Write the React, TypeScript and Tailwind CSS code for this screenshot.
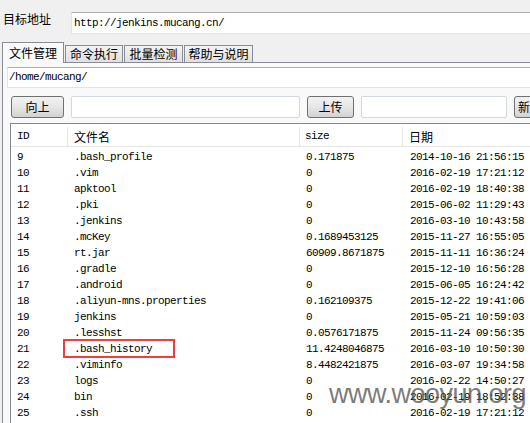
const rows = [
  { id: "9", name: ".bash_profile", size: "0.171875", date: "2014-10-16 21:56:15" },
  { id: "10", name: ".vim", size: "0", date: "2016-02-19 17:21:12" },
  { id: "11", name: "apktool", size: "0", date: "2016-02-19 18:40:38" },
  { id: "12", name: ".pki", size: "0", date: "2015-06-02 11:29:43" },
  { id: "13", name: ".jenkins", size: "0", date: "2016-03-10 10:43:58" },
  { id: "14", name: ".mcKey", size: "0.1689453125", date: "2015-11-27 16:55:05" },
  { id: "15", name: "rt.jar", size: "60909.8671875", date: "2015-11-11 16:36:24" },
  { id: "16", name: ".gradle", size: "0", date: "2015-12-10 16:56:28" },
  { id: "17", name: ".android", size: "0", date: "2015-06-05 16:24:42" },
  { id: "18", name: ".aliyun-mns.properties", size: "0.162109375", date: "2015-12-22 19:41:06" },
  { id: "19", name: "jenkins", size: "0", date: "2015-05-21 10:59:03" },
  { id: "20", name: ".lesshst", size: "0.0576171875", date: "2015-11-24 09:56:35" },
  { id: "21", name: ".bash_history", size: "11.4248046875", date: "2016-03-10 10:50:30" },
  { id: "22", name: ".viminfo", size: "8.4482421875", date: "2016-03-07 19:34:58" },
  { id: "23", name: "logs", size: "0", date: "2016-02-22 14:50:27" },
  { id: "24", name: "bin", size: "0", date: "2016-02-19 18:52:38" },
  { id: "25", name: ".ssh", size: "0", date: "2016-02-19 17:21:12" },
];

const mono = "font-['Liberation_Mono',monospace] text-[11px] tracking-[-0.6px]";
const btn =
  "h-[22px] shrink-0 flex items-center justify-center rounded-[3px] border border-[#707070] bg-gradient-to-b from-[#f2f2f2] via-[#e6e6e6] to-[#d2d2d2] text-[12px] leading-none";
const box = "h-[22px] shrink-0 rounded-[2px] border border-[#d3d9e1] bg-white";
const tab =
  "h-[17px] shrink-0 flex items-center justify-center border border-b-0 border-[#898c95] bg-gradient-to-b from-[#f3f3f3] to-[#e0e0e0] text-[12px] leading-none";

export default function App() {
  return (
    <div className="relative w-[530px] h-[423px] overflow-hidden bg-[#f0f0f0] font-['Noto_Sans_CJK_SC',sans-serif] text-black">
      {/* address */}
      <div className="flex pl-[3px] pt-[12px]">
        <div className="w-[68px] shrink-0 text-[12px] leading-[14px]">目标地址</div>
        <div className="w-[480px] h-[22px] shrink-0 flex items-center pl-[2px] bg-white border border-[#e2e3ea] border-t-[#abadb3]">
          <span className={mono}>http://jenkins.mucang.cn/</span>
        </div>
      </div>

      {/* tabs */}
      <div className="flex items-end h-[20px] mt-[8px] pl-[2px]">
        <div className="relative z-10 -mb-px h-[21px] w-[62px] shrink-0 flex items-center justify-center border border-b-0 border-[#898c95] bg-[#f9f9f9] text-[12px] leading-none">
          文件管理
        </div>
        <div className={`${tab} w-[58px] ml-[1px]`}>命令执行</div>
        <div className={`${tab} w-[59px] ml-[1px]`}>批量检测</div>
        <div className={`${tab} w-[69px] ml-[1px]`}>帮助与说明</div>
      </div>

      {/* panel */}
      <div className="ml-[2px] w-[560px] h-[400px] border-l border-t border-[#898c95] bg-[#f9f9f9]">
        <div className="ml-[4px] mt-[4px] h-[21px] flex items-center pl-[1px] bg-white border border-[#e2e3ea] border-t-[#abadb3]">
          <span className={mono}>/home/mucang/</span>
        </div>

        <div className="flex items-center ml-[8px] mt-[8px]">
          <div className={`${btn} w-[53px]`}>向上</div>
          <div className={`${box} w-[229px] ml-[7px]`} />
          <div className={`${btn} w-[47px] ml-[7px]`}>上传</div>
          <div className={`${box} w-[146px] ml-[7px]`} />
          <div className={`${btn} w-[53px] ml-[7px] justify-start pl-[3px]`}>新建</div>
        </div>

        {/* list */}
        <div className="ml-[7px] mt-[5px] border-l border-t border-[#828790] bg-white h-[320px]">
          <div className="flex h-[23px] pt-[3px] border-b border-[#e5e5e5] text-[12px]">
            <div className="w-[57px] shrink-0 pl-[6px] flex items-center border-r border-[#e5e5e5]">
              <span className={mono}>ID</span>
            </div>
            <div className="w-[232px] shrink-0 pl-[6px] flex items-center border-r border-[#e5e5e5]">文件名</div>
            <div className="w-[103px] shrink-0 pl-[5px] flex items-center border-r border-[#e5e5e5]">
              <span className={mono}>size</span>
            </div>
            <div className="pl-[6px] flex items-center">日期</div>
          </div>
          <div className="pt-[2px]">
            {rows.map((r) => (
              <div key={r.id} className={`flex h-[16px] items-center ${mono}`}>
                <div className="w-[57px] shrink-0 pl-[6px]">{r.id}</div>
                <div className="w-[233px] shrink-0 pl-[6px]">{r.name}</div>
                <div className="w-[103px] shrink-0 pl-[5px]">{r.size}</div>
                <div className="pl-[6px] whitespace-nowrap">{r.date}</div>
              </div>
            ))}
          </div>
        </div>
      </div>

      {/* annotation + watermark */}
      <div className="absolute left-[63px] top-[339px] w-[112px] h-[19px] border-2 border-[#ef3e3e]" />
      <div className="absolute left-[329px] top-[381px] font-['Liberation_Sans',Arial,sans-serif] text-[27px] leading-none tracking-[-0.5px] text-[#505050]/75 whitespace-nowrap">
        www.wooyun.org
      </div>
    </div>
  );
}
